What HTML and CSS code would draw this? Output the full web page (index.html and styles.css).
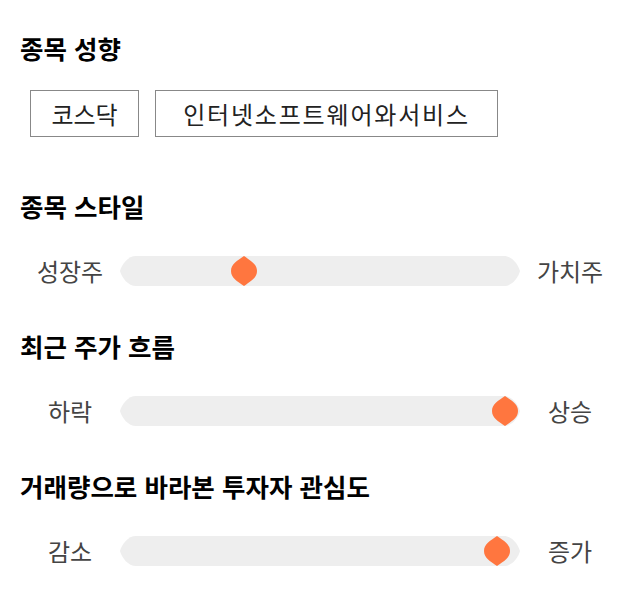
FILE: index.html
```html
<!DOCTYPE html>
<html lang="ko">
<head>
<meta charset="utf-8">
<link rel="stylesheet" href="styles.css">
</head>
<body>
<main class="page">
  <section class="section section-first">
    <h2 class="title">종목 성향</h2>
    <div class="chips">
      <span class="chip">코스닥</span>
      <span class="chip chip-wide">인터넷소프트웨어와서비스</span>
    </div>
  </section>

  <section class="section">
    <h2 class="title">종목 스타일</h2>
    <div class="slider-row">
      <span class="label">성장주</span>
      <div class="track">
        <svg class="track-shape" viewBox="0 0 400 30" width="400" height="30"><path d="M16 0 H384 C392 0 398 8 400 15 C398 22 392 30 384 30 H16 C8 30 2 22 0 15 C2 8 8 0 16 0 Z" fill="#eeeeee"/></svg>
        <svg class="thumb" style="left:111px" viewBox="0 0 26 30" width="26" height="30"><path d="M13 0 C20 5 26 8 26 15 C26 22 20 25 13 30 C6 25 0 22 0 15 C0 8 6 5 13 0 Z" fill="#ff763f"/></svg>
      </div>
      <span class="label">가치주</span>
    </div>
  </section>

  <section class="section">
    <h2 class="title">최근 주가 흐름</h2>
    <div class="slider-row">
      <span class="label">하락</span>
      <div class="track">
        <svg class="track-shape" viewBox="0 0 400 30" width="400" height="30"><path d="M16 0 H384 C392 0 398 8 400 15 C398 22 392 30 384 30 H16 C8 30 2 22 0 15 C2 8 8 0 16 0 Z" fill="#eeeeee"/></svg>
        <svg class="thumb" style="left:372px" viewBox="0 0 26 30" width="26" height="30"><path d="M13 0 C20 5 26 8 26 15 C26 22 20 25 13 30 C6 25 0 22 0 15 C0 8 6 5 13 0 Z" fill="#ff763f"/></svg>
      </div>
      <span class="label">상승</span>
    </div>
  </section>

  <section class="section">
    <h2 class="title">거래량으로 바라본 투자자 관심도</h2>
    <div class="slider-row">
      <span class="label">감소</span>
      <div class="track">
        <svg class="track-shape" viewBox="0 0 400 30" width="400" height="30"><path d="M16 0 H384 C392 0 398 8 400 15 C398 22 392 30 384 30 H16 C8 30 2 22 0 15 C2 8 8 0 16 0 Z" fill="#eeeeee"/></svg>
        <svg class="thumb" style="left:364px" viewBox="0 0 26 30" width="26" height="30"><path d="M13 0 C20 5 26 8 26 15 C26 22 20 25 13 30 C6 25 0 22 0 15 C0 8 6 5 13 0 Z" fill="#ff763f"/></svg>
      </div>
      <span class="label">증가</span>
    </div>
  </section>
</main>
</body>
</html>
```

FILE: styles.css
```css
* { box-sizing: border-box; }
html, body { margin: 0; padding: 0; background: #ffffff; }
body {
  font-family: "Noto Sans CJK KR", "Noto Sans", sans-serif;
  color: #111111;
}
.page {
  padding: 33px 20px 0 20px;
  display: flex;
  flex-direction: column;
  gap: 45px;
}
.section-first { margin-bottom: 9px; }
.title {
  margin: 0 0 35px 0;
  font-size: 25.5px;
  line-height: 30px;
  font-weight: 700;
  color: #000000;
}
.section-first .title { margin-bottom: 27px; }
.chips {
  display: flex;
  gap: 16px;
  padding-left: 10px;
}
.chip {
  display: inline-flex;
  align-items: center;
  justify-content: center;
  height: 47px;
  width: 109px;
  border: 1px solid #888888;
  font-size: 24px;
  color: #222222;
}
.chip-wide { width: 343px; letter-spacing: 1.8px; }
.slider-row {
  display: grid;
  grid-template-columns: 100px 400px 100px;
  align-items: center;
  height: 30px;
}
.label {
  text-align: center;
  font-size: 24px;
  color: #444444;
  line-height: 30px;
}
.track {
  position: relative;
  width: 400px;
  height: 30px;
}
.track-shape { display: block; }
.thumb {
  position: absolute;
  top: 0;
}
```
